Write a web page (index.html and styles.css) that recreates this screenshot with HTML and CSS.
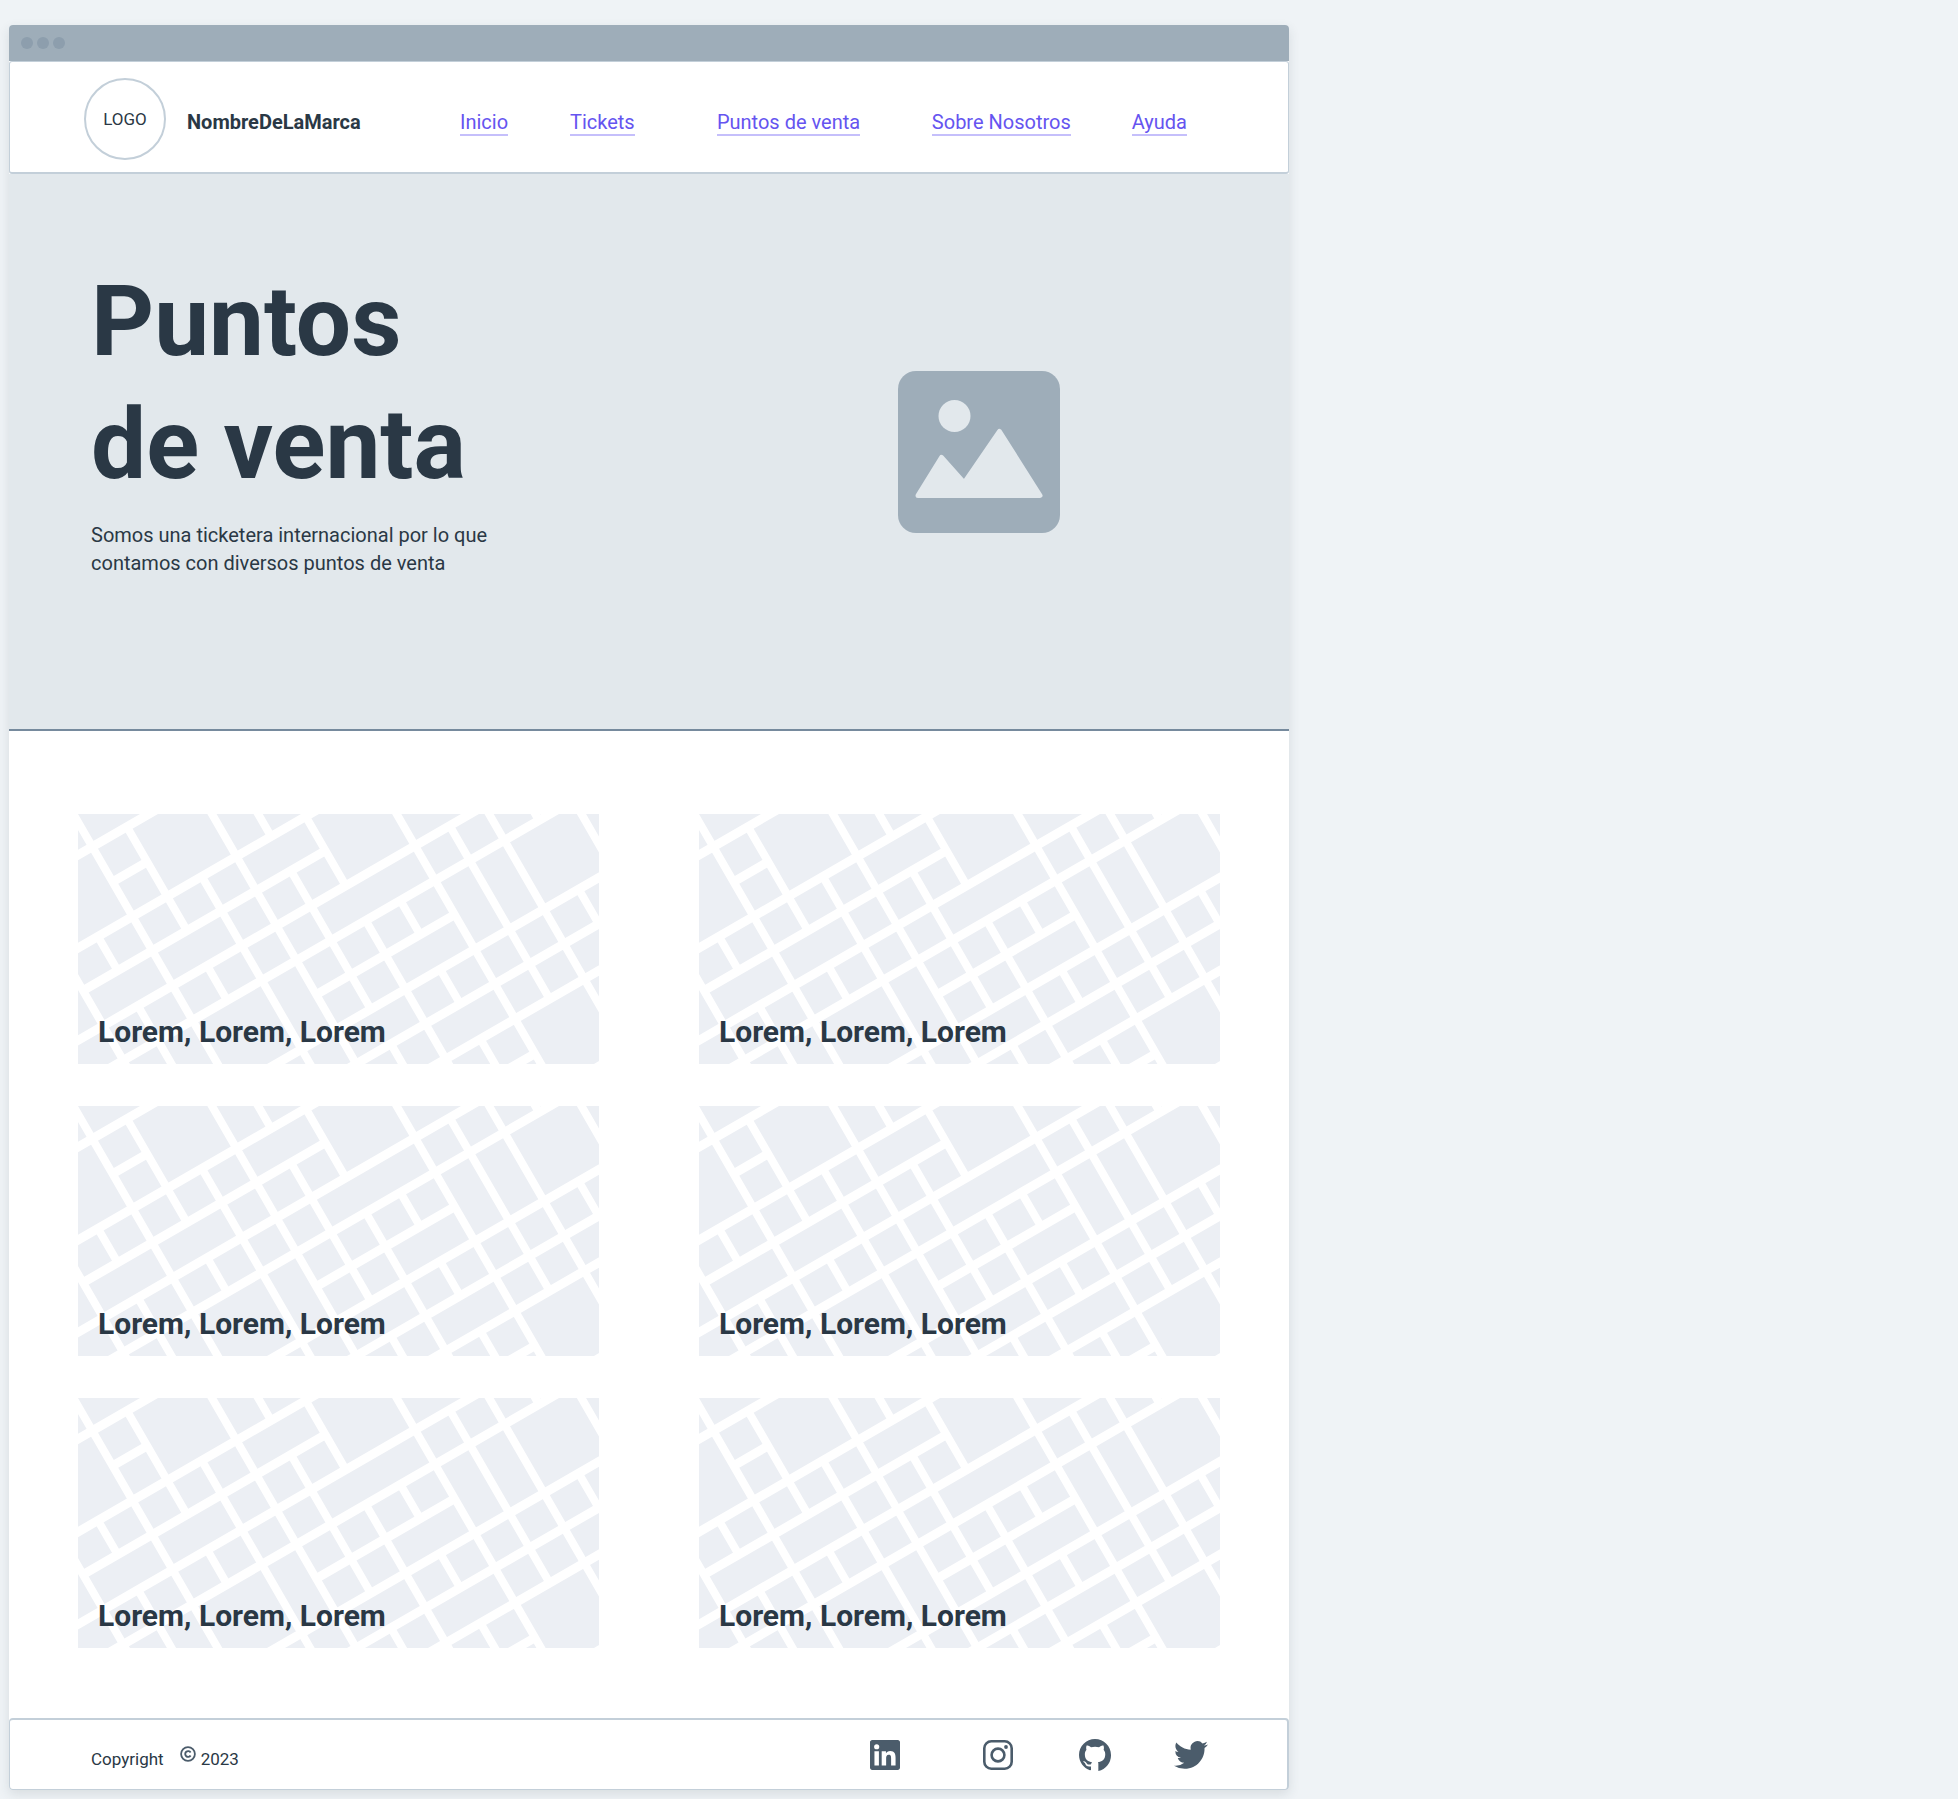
FILE: index.html
```html
<!DOCTYPE html>
<html lang="es">
<head>
<meta charset="utf-8">
<meta name="viewport" content="width=device-width, initial-scale=1">
<title>Puntos de venta</title>
<link rel="stylesheet" href="styles.css">
</head>
<body>
<svg class="defs" aria-hidden="true">
  <symbol id="streets" viewBox="0 0 521 250" preserveAspectRatio="xMidYMid slice">
    <rect width="521" height="250" fill="#eceff4"/>
    <g transform="rotate(-30)" fill="none" stroke="#fff">
      <path stroke-width="9" d="M-130 35.500H200M-4 76H36M-130 116H260M-84 155.500H196M-200 196H460M-200 236H460M116 275.500H276M-200 315.500H460M-200 355.500H460M-200 396H460M-200 436H276M300 479H460"/>
      <path stroke-width="8" d="M-84 0V480M-44 116V156M-44 196V480M-4 0V480M36 36V156M36 196V236M76 116V480M116 0V480M156 0V116M156 156V316M156 356V480M196 116V196M196 236V480M236 236V276M236 316V356M236 396V480M276 0V480M316 196V396M356 0V480M396 0V236M396 316V356M436 0V480"/>
    </g>
  </symbol>
</svg>

<div class="window">
  <div class="titlebar"><span></span><span></span><span></span></div>

  <header class="header">
    <div class="brand">
      <div class="logo">LOGO</div>
      <strong class="brand-name">NombreDeLaMarca</strong>
    </div>
    <nav class="nav">
      <a href="#">Inicio</a>
      <a href="#">Tickets</a>
      <a href="#">Puntos de venta</a>
      <a href="#">Sobre Nosotros</a>
      <a href="#">Ayuda</a>
    </nav>
  </header>

  <section class="hero">
    <div class="hero-copy">
      <h1>Puntos<br>de venta</h1>
      <p>Somos una ticketera internacional por lo que<br>contamos con diversos puntos de venta</p>
    </div>
    <svg class="hero-image" viewBox="0 0 162 162" aria-hidden="true">
      <rect width="162" height="162" rx="18" fill="#9eadb9"/>
      <circle cx="56.500" cy="45" r="16" fill="#e2e8ec"/>
      <path d="M20 124.500 43.500 86.500 66.200 111.800 101.500 60.500 142 124.500Z" fill="#e2e8ec" stroke="#e2e8ec" stroke-width="5" stroke-linejoin="round"/>
    </svg>
  </section>

  <main class="places">
    <article class="place"><svg class="map" aria-hidden="true"><use href="#streets"/></svg><h2>Lorem, Lorem, Lorem</h2></article>
    <article class="place"><svg class="map" aria-hidden="true"><use href="#streets"/></svg><h2>Lorem, Lorem, Lorem</h2></article>
    <article class="place"><svg class="map" aria-hidden="true"><use href="#streets"/></svg><h2>Lorem, Lorem, Lorem</h2></article>
    <article class="place"><svg class="map" aria-hidden="true"><use href="#streets"/></svg><h2>Lorem, Lorem, Lorem</h2></article>
    <article class="place"><svg class="map" aria-hidden="true"><use href="#streets"/></svg><h2>Lorem, Lorem, Lorem</h2></article>
    <article class="place"><svg class="map" aria-hidden="true"><use href="#streets"/></svg><h2>Lorem, Lorem, Lorem</h2></article>
  </main>

  <footer class="footer">
    <p class="copyright">
      <span>Copyright</span>
      <svg viewBox="0 0 16 16" role="img" aria-label="©"><circle cx="8" cy="8" r="6.900" fill="none" stroke="#4b5c6b" stroke-width="1.800"/><path d="M10.600 6.500A2.900 2.900 0 1 0 10.600 9.500" fill="none" stroke="#4b5c6b" stroke-width="1.900"/></svg>
      <span>2023</span>
    </p>
    <div class="social">
      <a href="#" aria-label="LinkedIn"><svg width="30" height="30" viewBox="0 0 24 24"><path d="M22.230 0H1.770C.79 0 0 .77 0 1.730v20.540C0 23.230.79 24 1.770 24h20.450c.98 0 1.780-.77 1.780-1.730V1.730C24 .77 23.200 0 22.230 0zM7.120 20.450H3.560V9h3.560v11.450zM5.340 7.430a2.060 2.060 0 1 1 0-4.120 2.060 2.060 0 0 1 0 4.120zM20.450 20.450h-3.560v-5.570c0-1.330-.02-3.040-1.850-3.040-1.850 0-2.130 1.450-2.130 2.940v5.670H9.350V9h3.410v1.560h.05c.48-.9 1.640-1.850 3.370-1.850 3.600 0 4.270 2.370 4.270 5.460v6.280z"/></svg></a>
      <a href="#" aria-label="Instagram"><svg width="30" height="30" viewBox="0 0 30 30"><rect x="1.300" y="1.300" width="27.400" height="27.400" rx="7" fill="none" stroke="#4b5c6b" stroke-width="2.600"/><circle cx="15" cy="15" r="6.400" fill="none" stroke="#4b5c6b" stroke-width="2.600"/><circle cx="23" cy="7" r="1.900"/></svg></a>
      <a href="#" aria-label="GitHub"><svg width="32" height="32" viewBox="0 0 16 16"><path d="M8 0C3.580 0 0 3.580 0 8c0 3.540 2.290 6.530 5.470 7.590.4.070.55-.17.55-.38 0-.19-.01-.82-.01-1.490-2.010.37-2.530-.49-2.690-.94-.09-.23-.48-.94-.82-1.130-.28-.15-.68-.52-.01-.53.63-.01 1.080.58 1.230.82.72 1.210 1.870.87 2.330.66.07-.52.28-.87.51-1.070-1.780-.2-3.640-.89-3.640-3.950 0-.87.31-1.590.82-2.150-.08-.2-.36-1.020.08-2.120 0 0 .67-.21 2.200.82.64-.18 1.320-.27 2-.27s1.360.09 2 .27c1.530-1.040 2.200-.82 2.200-.82.44 1.100.16 1.920.08 2.120.51.56.82 1.270.82 2.150 0 3.070-1.870 3.750-3.650 3.950.1.090.2.300.2.800V16A8.010 8.010 0 0 0 16 8c0-4.420-3.580-8-8-8z"/></svg></a>
      <a href="#" aria-label="Twitter"><svg width="34" height="34" viewBox="0 0 24 24"><path d="M23.950 4.570a10 10 0 0 1-2.820.77 4.960 4.960 0 0 0 2.160-2.720c-.95.550-2 .95-3.130 1.180a4.920 4.920 0 0 0-8.380 4.480C7.690 8.090 4.070 6.130 1.640 3.160a4.820 4.820 0 0 0-.67 2.480c0 1.710.87 3.210 2.190 4.100a4.900 4.900 0 0 1-2.230-.62v.06a4.920 4.920 0 0 0 3.950 4.830 5 5 0 0 1-2.210.08 4.940 4.940 0 0 0 4.600 3.420A9.870 9.870 0 0 1 0 19.540a14 14 0 0 0 7.550 2.210c9.050 0 14-7.500 14-13.980 0-.21 0-.42-.02-.63a9.940 9.940 0 0 0 2.460-2.550z"/></svg></a>
    </div>
  </footer>
</div>
</body>
</html>
```
FILE: styles.css
```css
* {
  box-sizing: border-box;
}

body {
  margin: 0;
  padding: 25px 9px 9px;
  background: #eff3f6;
  color: #2a3845;
  font-family: Roboto, "Liberation Sans", sans-serif;
}

h1,
h2,
p {
  margin: 0;
}

.defs {
  display: none;
}

.window {
  max-width: 1280px;
  background: #fff;
  border-radius: 4px;
  box-shadow: 0 4px 12px rgba(42, 56, 69, 0.12);
}

.titlebar {
  display: flex;
  align-items: center;
  gap: 4px;
  height: 36px;
  padding: 0 12px;
  background: #9eadb9;
  border-radius: 4px 4px 0 0;
}

.titlebar span {
  width: 12px;
  height: 12px;
  border-radius: 50%;
  background: #8d9ead;
}

.header {
  display: flex;
  align-items: center;
  justify-content: space-between;
  padding: 16px 101px 12px 74px;
  border: 1px solid #c3cfd9;
  border-bottom-width: 2px;
  border-radius: 3px;
}

.brand {
  display: flex;
  align-items: center;
  gap: 21px;
}

.logo {
  display: grid;
  place-items: center;
  width: 82px;
  height: 82px;
  border: 2px solid #c3cfd9;
  border-radius: 50%;
  font-size: 17px;
}

.brand-name {
  padding-top: 5px;
  font-size: 20px;
}

.nav {
  display: grid;
  grid-template-columns: 110fr 147fr 215fr 200fr 55fr;
  flex: 0 1 727px;
  justify-items: start;
  padding-top: 7px;
}

.nav a {
  border-bottom: 2px solid #c5bffb;
  color: #6554f0;
  font-size: 20px;
  line-height: 24px;
  text-decoration: none;
  white-space: nowrap;
}

.hero {
  display: grid;
  grid-template-columns: 1fr 620px;
  align-items: center;
  padding-left: 82px;
  background: #e2e8ec;
  border-bottom: 2px solid #768a9d;
}

.hero-copy {
  padding: 86px 0 152px;
}

.hero h1 {
  font-size: 98px;
  line-height: 123px;
}

.hero p {
  margin-top: 15px;
  font-size: 20px;
  line-height: 28px;
}

.hero-image {
  width: 162px;
  justify-self: center;
}

.places {
  display: grid;
  grid-template-columns: 1fr 1fr;
  gap: 42px 100px;
  padding: 83px 69px 70px;
}

.place {
  display: grid;
  align-items: end;
  height: 250px;
}

.place > * {
  grid-area: 1 / 1;
}

.map {
  width: 100%;
  height: 250px;
}

.place h2 {
  padding: 0 20px 14px;
  font-size: 30px;
  line-height: 36px;
}

.footer {
  display: flex;
  align-items: center;
  justify-content: space-between;
  height: 72px;
  padding: 0 79px 0 81px;
  border: 1px solid #c3cfd9;
  border-top-width: 2px;
  border-right-width: 2px;
  border-radius: 4px;
}

.copyright {
  display: flex;
  align-items: center;
  padding-top: 8px;
  font-size: 17px;
  line-height: 24px;
}

.copyright svg {
  width: 16px;
  height: 16px;
  margin: 0 5px 10px 16px;
}

.social {
  display: grid;
  grid-template-columns: 113px 96px 95px 34px;
  align-items: center;
}

.social a {
  display: flex;
}

.social svg {
  fill: #4b5c6b;
}
```
